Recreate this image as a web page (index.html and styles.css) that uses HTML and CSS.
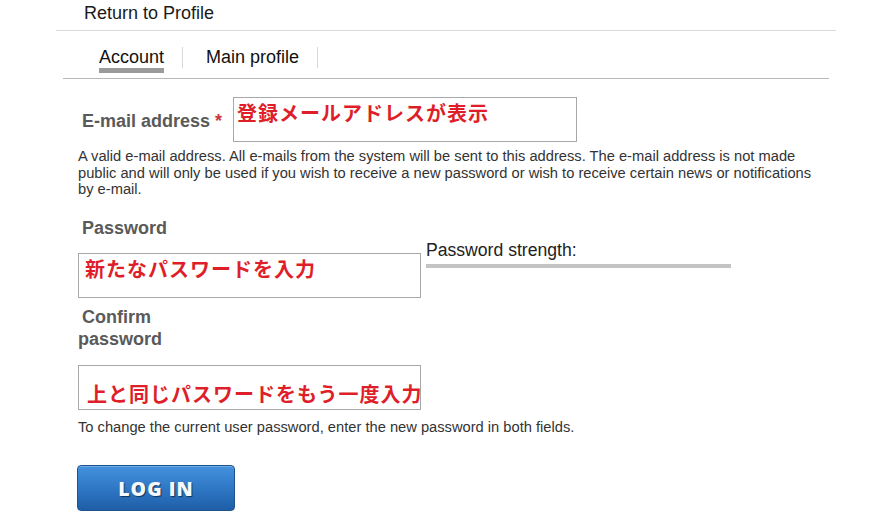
FILE: index.html
```html
<!DOCTYPE html>
<html lang="en">
<head>
<meta charset="utf-8">
<title>Account</title>
<link rel="stylesheet" href="styles.css">
</head>
<body>
<div class="return-bar"><a class="return-link" href="#">Return to Profile</a></div>
<ul class="tabs">
  <li class="tab tab-first"><a class="tab-link active" href="#">Account</a></li>
  <li class="tab"><a class="tab-link" href="#">Main profile</a></li>
</ul>
<form class="form">
  <div class="email-row">
    <label class="label email-label">E-mail address <span class="req">*</span></label>
    <div class="text-input email-input">登録メールアドレスが表示</div>
  </div>
  <p class="desc email-desc">A valid e-mail address. All e-mails from the system will be sent to this address. The e-mail address is not made public and will only be used if you wish to receive a new password or wish to receive certain news or notifications by e-mail.</p>
  <label class="label pass-label">Password</label>
  <div class="pass-row">
    <div class="text-input pass-input">新たなパスワードを入力</div>
    <div class="strength">
      <div class="strength-text">Password strength:</div>
      <div class="strength-bar"></div>
    </div>
  </div>
  <label class="label confirm-label">Confirm password</label>
  <div class="text-input confirm-input">上と同じパスワードをもう一度入力</div>
  <p class="desc help-desc">To change the current user password, enter the new password in both fields.</p>
  <button type="button" class="login-btn">LOG IN</button>
</form>
</body>
</html>
```
FILE: styles.css
```css
* { box-sizing: border-box; }
body {
  margin: 0;
  background: #fff;
  font-family: "Liberation Sans", Arial, sans-serif;
  color: #222;
}
.return-bar {
  margin-left: 56px;
  width: 780px;
  height: 31px;
  border-bottom: 1px solid #dadada;
  padding-left: 28px;
  font-size: 18px;
  line-height: 27px;
}
.return-link { color: #1a1a1a; text-decoration: none; }
.tabs {
  list-style: none;
  margin: 0 0 0 63px;
  width: 766px;
  height: 48px;
  border-bottom: 1px solid #b8b8b8;
  padding: 16px 0 0 36px;
  display: flex;
  align-items: flex-start;
}
.tab {
  height: 21px;
  border-right: 1px solid #d8d8d8;
  padding: 0 18px 0 23px;
}
.tab-first { padding-left: 0; }
.tab-link {
  display: block;
  font-size: 18px;
  line-height: 21px;
  color: #111;
  text-decoration: none;
}
.tab-link.active { border-bottom: 5px solid #9b9b9b; }
.form { padding-left: 78px; margin: 0; }
.email-row {
  display: flex;
  align-items: flex-start;
  margin-top: 18px;
}
.label {
  display: block;
  font-weight: bold;
  font-size: 18px;
  line-height: 20px;
  color: #5a5a5a;
}
.email-label {
  flex: 0 0 155px;
  margin-top: 14px;
  padding-left: 4px;
  white-space: nowrap;
}
.req { color: #c8383c; }
.text-input {
  height: 45px;
  border: 1px solid #a8a8a8;
  background: #fff;
  font-family: "Noto Sans CJK JP", sans-serif;
  font-weight: bold;
  font-size: 20px;
  letter-spacing: 1px;
  line-height: 24px;
  color: #de1f2a;
  white-space: nowrap;
  overflow: hidden;
}
.email-input { width: 344px; padding: 3px 3px; }
.desc {
  margin: 6px 0 0;
  width: 734px;
  font-size: 14.7px;
  line-height: 16.5px;
  color: #333;
}
.pass-label { margin-top: 20px; padding-left: 4px; }
.pass-row {
  display: flex;
  align-items: flex-start;
}
.pass-input { width: 343px; margin-top: 15px; padding: 3px 6px; }
.strength { margin-left: 5px; padding-top: 3px; }
.strength-text { font-size: 17.6px; line-height: 18px; color: #222; }
.strength-bar {
  margin-top: 5px;
  width: 305px;
  height: 4px;
  background: #c4c4c4;
}
.confirm-label {
  margin-top: 8px;
  width: 110px;
  line-height: 22px;
  text-indent: 4px;
}
.confirm-input { width: 343px; margin-top: 15px; padding: 16px 8px 0; }
.help-desc { margin-top: 9px; }
.login-btn {
  display: block;
  margin: 30px 0 0 -1px;
  width: 158px;
  height: 46px;
  border: 1px solid #1d548e;
  border-radius: 4px;
  background: linear-gradient(#4591dc, #2f78c6 50%, #1f5ea7);
  box-shadow: inset 0 1px 0 rgba(255,255,255,0.25);
  color: #f5f9fd;
  font-family: "Open Sans", sans-serif;
  font-weight: 800;
  font-size: 19.5px;
  letter-spacing: 1px;
  text-shadow: 1px 1px 1px rgba(0,0,0,0.55);
  padding: 0;
}
```
